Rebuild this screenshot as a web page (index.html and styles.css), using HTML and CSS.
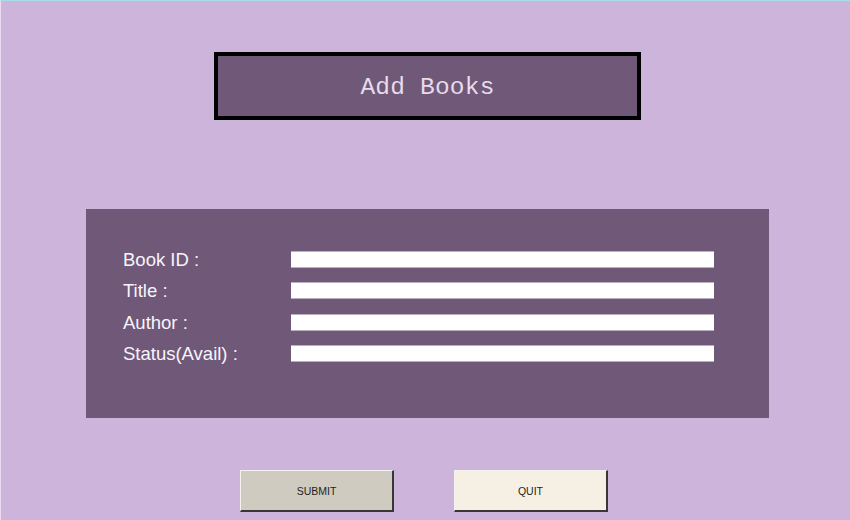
FILE: index.html
```html
<!DOCTYPE html>
<html>
<head>
<meta charset="utf-8">
<link rel="stylesheet" href="styles.css">
</head>
<body>
<div class="window">
  <div class="heading"><span>Add Books</span></div>
  <div class="form-panel">
    <div class="form-grid">
      <label class="field-label">Book ID :</label><div class="entry"></div>
      <label class="field-label">Title :</label><div class="entry"></div>
      <label class="field-label">Author :</label><div class="entry"></div>
      <label class="field-label">Status(Avail) :</label><div class="entry"></div>
    </div>
  </div>
  <div class="actions">
    <button class="btn btn-submit">SUBMIT</button>
    <button class="btn btn-quit">QUIT</button>
  </div>
</div>
</body>
</html>
```
FILE: styles.css
```css
html, body {
  margin: 0;
  padding: 0;
}
body {
  width: 850px;
  height: 520px;
  overflow: hidden;
  background: #cdb4da;
}
.window {
  box-sizing: border-box;
  width: 850px;
  height: 520px;
  border-top: 1px solid #a6dde6;
  border-left: 1px solid #ecdcef;
  display: flex;
  flex-direction: column;
  align-items: flex-start;
}
.heading {
  box-sizing: border-box;
  margin-top: 51px;
  margin-left: 213px;
  width: 427px;
  height: 68px;
  border: 4px solid #000;
  background: #6f5878;
  display: flex;
  align-items: center;
  justify-content: center;
  padding-top: 2px;
}
.heading span {
  font-family: "Courier New", "Liberation Mono", monospace;
  font-size: 24.5px;
  color: #e6dcec;
  padding-left: 0;
  letter-spacing: 0.2px;
}
.form-panel {
  box-sizing: border-box;
  margin-top: 89px;
  margin-left: 85px;
  width: 683px;
  height: 209px;
  background: #6f5878;
  padding: 42px 0 0 37px;
}
.form-grid {
  display: grid;
  grid-template-columns: 168px 423px;
  grid-auto-rows: 17px;
  row-gap: 14.33px;
  align-items: center;
}
.field-label {
  font-family: "Liberation Sans", Arial, sans-serif;
  font-size: 18.5px;
  color: #f8f4fa;
  line-height: 17px;
  white-space: nowrap;
}
.entry {
  box-sizing: border-box;
  height: 17px;
  background: #fff;
  border-top: 1px solid #b9b0bf;
  border-bottom: 1px solid #b9b0bf;
}
.actions {
  margin-top: 52px;
  margin-left: 239px;
  display: flex;
  gap: 60px;
}
.btn {
  box-sizing: border-box;
  height: 42px;
  padding: 0;
  border-top: 1px solid #f4f2ee;
  border-left: 1px solid #f4f2ee;
  border-right: 2px solid #3a3536;
  border-bottom: 2px solid #3a3536;
  font-family: "Liberation Sans", Arial, sans-serif;
  font-size: 10.5px;
  color: #1e1e1e;
  cursor: pointer;
}
.btn-submit {
  width: 154px;
  background: #cfcbc0;
}
.btn-quit {
  width: 154px;
  background: #f6f0e4;
}
```
